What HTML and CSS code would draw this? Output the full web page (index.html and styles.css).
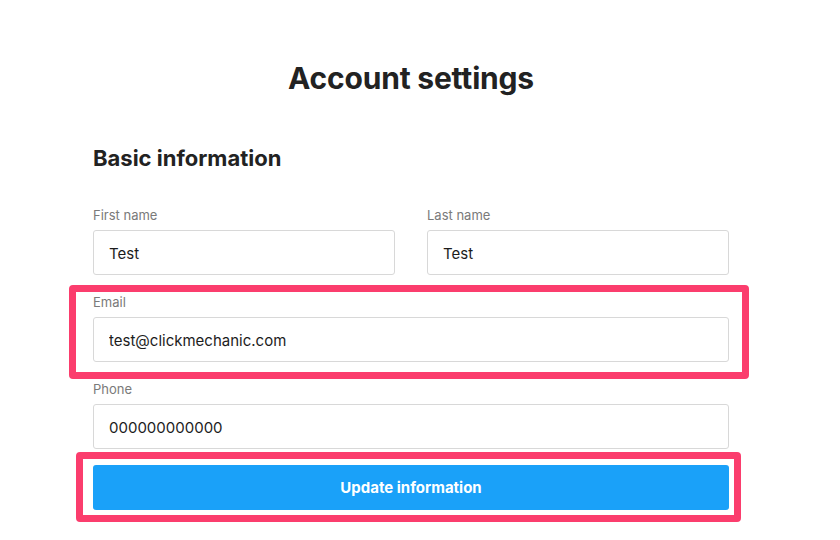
FILE: index.html
```html
<!DOCTYPE html>
<html lang="en">
<head>
  <meta charset="UTF-8">
  <meta name="viewport" content="width=device-width, initial-scale=1.0">
  <title>Account settings</title>
  <link rel="stylesheet" href="styles.css">
</head>
<body>
<div class="container">
  <h1>Account settings</h1>
  <h2>Basic information</h2>
  <div class="row">
    <div class="form-group">
      <label for="firstName">First name</label>
      <input type="text" id="firstName" value="Test">
    </div>
    <div class="form-group">
      <label for="lastName">Last name</label>
      <input type="text" id="lastName" value="Test">
    </div>
  </div>
  <div class="form-group highlight highlight-email">
    <label for="email">Email</label>
    <input type="text" id="email" value="test@clickmechanic.com">
  </div>
  <div class="form-group form-group-last">
    <label for="phone">Phone</label>
    <input type="text" id="phone" value="000000000000">
  </div>
  <div class="highlight highlight-btn">
    <button id="saveBtn">Update information</button>
  </div>
</div>
</body>
</html>
```

FILE: styles.css
```css
body {
  font-family: 'Inter', 'Liberation Sans', sans-serif;
  margin: 0;
  color: #222;
  background: #fff;
}
.container {
  width: 636px;
  margin-left: 93px;
  padding-bottom: 30px;
}
h1 {
  margin: 0;
  padding-top: 59px;
  height: 38px;
  line-height: 38px;
  font-size: 30px;
  font-weight: 700;
  letter-spacing: -0.2px;
  text-align: center;
}
h2 {
  margin: 47px 0 0;
  line-height: 28px;
  font-size: 22px;
  font-weight: 700;
}
.row {
  display: grid;
  grid-template-columns: 1fr 1fr;
  gap: 32px;
  margin-top: 35px;
}
.form-group {
  margin-bottom: 19px;
}
.form-group-last {
  margin-bottom: 16px;
}
label {
  display: block;
  line-height: 16px;
  font-size: 13px;
  color: #7a7a7a;
  margin-bottom: 7px;
}
input[type="text"] {
  display: block;
  box-sizing: border-box;
  width: 100%;
  height: 45px;
  padding: 1px 15px 0;
  font-family: inherit;
  font-size: 15px;
  color: #1c1c1c;
  border: 1px solid #d8d8d8;
  border-radius: 3px;
  background: #fff;
}
button {
  display: block;
  width: 100%;
  height: 45px;
  font-family: inherit;
  font-size: 15px;
  font-weight: 700;
  background-color: #1aa1f9;
  color: #fff;
  border: none;
  border-radius: 3px;
  cursor: pointer;
}
.highlight {
  position: relative;
}
.highlight::after {
  content: "";
  position: absolute;
  border: 7px solid #fb3d6d;
  border-radius: 4px;
  pointer-events: none;
}
.highlight-email::after {
  top: -9px;
  bottom: -17px;
  left: -24px;
  right: -20px;
}
.highlight-btn::after {
  top: -13px;
  bottom: -12px;
  left: -17px;
  right: -12px;
}
```
